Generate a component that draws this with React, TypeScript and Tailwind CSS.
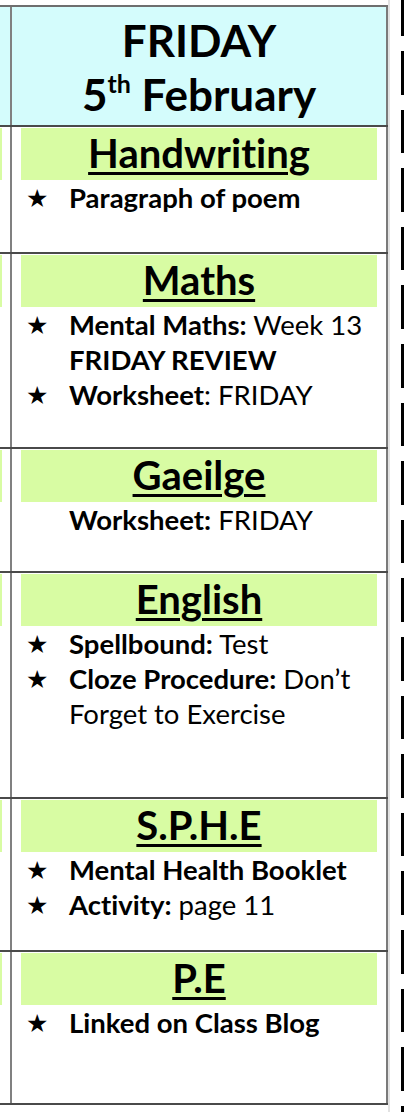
import React from 'react';

type Item = { star?: boolean; content: React.ReactNode };

type Lesson = {
  title: string;
  height: string;
  items: Item[];
};

const lessons: Lesson[] = [
  {
    title: 'Handwriting',
    height: 'h-[127px]',
    items: [{ star: true, content: <b>Paragraph of poem</b> }],
  },
  {
    title: 'Maths',
    height: 'h-[195px]',
    items: [
      {
        star: true,
        content: (
          <>
            <b>Mental Maths:</b> Week 13
            <br />
            <b>FRIDAY REVIEW</b>
          </>
        ),
      },
      {
        star: true,
        content: (
          <>
            <b>Worksheet</b>: FRIDAY
          </>
        ),
      },
    ],
  },
  {
    title: 'Gaeilge',
    height: 'h-[124px]',
    items: [
      {
        content: (
          <>
            <b>Worksheet:</b> FRIDAY
          </>
        ),
      },
    ],
  },
  {
    title: 'English',
    height: 'h-[226px]',
    items: [
      {
        star: true,
        content: (
          <>
            <b>Spellbound:</b> Test
          </>
        ),
      },
      {
        star: true,
        content: (
          <>
            <b>Cloze Procedure:</b> Don’t
            <br />
            Forget to Exercise
          </>
        ),
      },
    ],
  },
  {
    title: 'S.P.H.E',
    height: 'h-[153px]',
    items: [
      { star: true, content: <b>Mental Health Booklet</b> },
      {
        star: true,
        content: (
          <>
            <b>Activity:</b> page 11
          </>
        ),
      },
    ],
  },
  {
    title: 'P.E',
    height: 'h-[153px]',
    items: [{ star: true, content: <b>Linked on Class Blog</b> }],
  },
];

function LessonRow({ lesson }: { lesson: Lesson }) {
  return (
    <div className={`flex ${lesson.height} border-b-2 border-[#4a4a4a]`}>
      {/* cropped previous day column */}
      <div className="w-[12px] border-r-2 border-[#808080] bg-white">
        <div className="mt-[1px] h-[52px] w-[2px] bg-[#d8fca3]" />
      </div>
      <div className="flex-1 border-r-2 border-[#7a7a7a] bg-white px-[9px]">
        <div className="mt-[1px] h-[52px] bg-[#d8fca3] text-center text-[40px] font-bold leading-[50px]">
          <span className="underline decoration-[3px] underline-offset-[4px]">{lesson.title}</span>
        </div>
        <div className="text-[27.5px] leading-[35px]">
          {lesson.items.map((item, idx) => (
            <div key={idx} className="flex">
              <div className="w-[48px] shrink-0 pl-[5px] text-[25px]">{item.star ? '★' : ''}</div>
              <div className="flex-1">{item.content}</div>
            </div>
          ))}
        </div>
      </div>
    </div>
  );
}

export default function App() {
  return (
    <div
      className="flex h-[1112px] w-[404px] overflow-hidden bg-white text-black [font-variant-ligatures:none]"
      style={{ fontFamily: 'Lato, "Open Sans", sans-serif' }}
    >
      <div className="w-[388px] pt-[5px]">
        <div className="border-t-2 border-[#6e6e6e]">
          <div className="flex h-[120px] border-b-2 border-[#4a4a4a] bg-[#d4fcfc]">
            <div className="w-[12px] border-r-2 border-[#808080]" />
            <div className="flex-1 border-r-2 border-[#7a7a7a] pt-[6px] text-center text-[44px] font-bold leading-[54px]">
              <div>FRIDAY</div>
              <div>
                5<span className="align-[18px] text-[25px] leading-none">th</span> February
              </div>
            </div>
          </div>
          {lessons.map(lesson => (
            <LessonRow key={lesson.title} lesson={lesson} />
          ))}
        </div>
      </div>
      <div className="flex-1 border-l-2 border-[#e2e2e2] pl-[11px]">
        <div className="flex flex-col gap-[15px]">
          <div className="h-[36px] w-[3px] shrink-0 bg-black" />
          {Array.from({ length: 19 }).map((_, i) => (
            <div key={i} className="h-[43.6px] w-[3px] shrink-0 bg-black" />
          ))}
        </div>
      </div>
    </div>
  );
}
